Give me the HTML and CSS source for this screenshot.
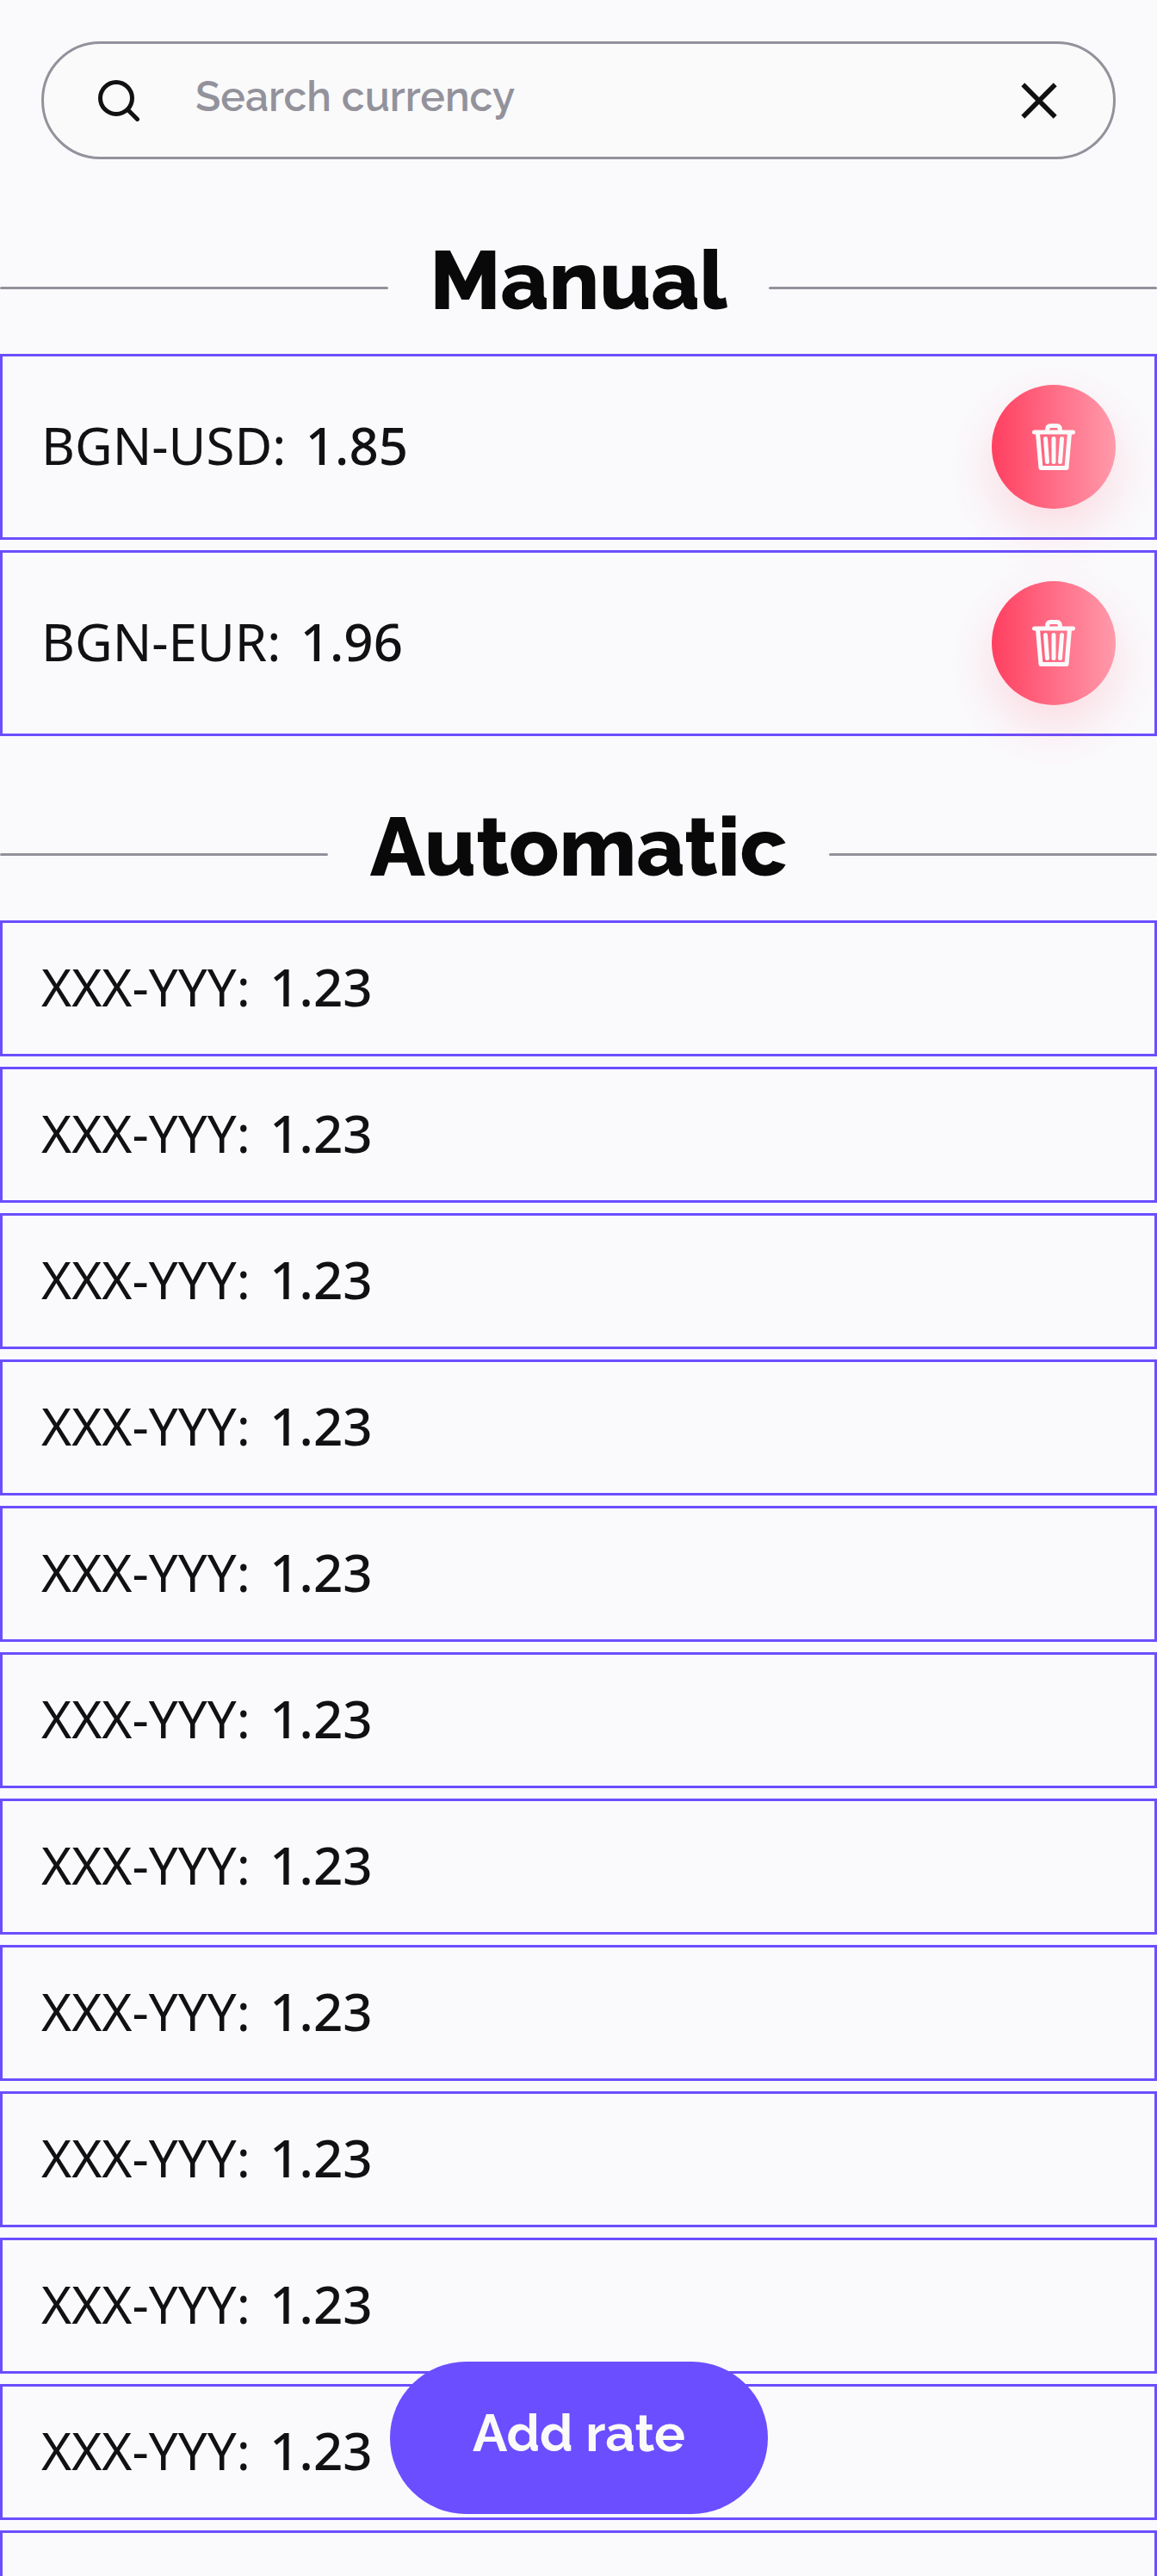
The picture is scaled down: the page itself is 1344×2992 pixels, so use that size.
FILE: index.html
```html
<!DOCTYPE html>
<html lang="en">
<head>
<meta charset="utf-8">
<title>Currency rates</title>
<link rel="stylesheet" href="styles.css">
</head>
<body>
<svg class="sprite" width="0" height="0">
  <symbol id="trash" viewBox="0 0 50 54">
    <g fill="none" stroke="currentColor" stroke-width="5" stroke-linecap="round" stroke-linejoin="round">
      <path d="M2.5 10H47.5M17.5 9V7.5Q17.5 2.5 21.5 2.5H28.5Q32.5 2.5 32.5 7.5V9M6.5 11 10 51.5H40L43.5 11"/>
      <path d="M15.5 17.5 17.5 44.5M25 17.5V44.5M34.5 17.5 32.5 44.5"/>
    </g>
  </symbol>
</svg>
<main class="screen">
  <div class="search">
    <svg class="search-icon" viewBox="0 0 48 48"><circle cx="21" cy="21" r="18.5"/><path d="M34.5 34.5 45.5 45.5"/></svg>
    <span class="placeholder">Search currency</span>
    <svg class="close-icon" viewBox="0 0 42 42"><path d="M2.3 2.3 39.7 39.7M39.7 2.3 2.3 39.7"/></svg>
  </div>
  <section class="group manual">
    <h2 class="title"><span>Manual</span></h2>
    <ul class="list">
      <li class="row tall"><span class="pair">BGN-USD:</span><b class="value">1.85</b><button class="delete" aria-label="Delete"><svg><use href="#trash"/></svg></button></li>
      <li class="row tall"><span class="pair">BGN-EUR:</span><b class="value">1.96</b><button class="delete" aria-label="Delete"><svg><use href="#trash"/></svg></button></li>
    </ul>
  </section>
  <section class="group automatic">
    <h2 class="title"><span>Automatic</span></h2>
    <ul class="list">
      <li class="row"><span class="pair">XXX-YYY:</span><b class="value">1.23</b></li>
      <li class="row"><span class="pair">XXX-YYY:</span><b class="value">1.23</b></li>
      <li class="row"><span class="pair">XXX-YYY:</span><b class="value">1.23</b></li>
      <li class="row"><span class="pair">XXX-YYY:</span><b class="value">1.23</b></li>
      <li class="row"><span class="pair">XXX-YYY:</span><b class="value">1.23</b></li>
      <li class="row"><span class="pair">XXX-YYY:</span><b class="value">1.23</b></li>
      <li class="row"><span class="pair">XXX-YYY:</span><b class="value">1.23</b></li>
      <li class="row"><span class="pair">XXX-YYY:</span><b class="value">1.23</b></li>
      <li class="row"><span class="pair">XXX-YYY:</span><b class="value">1.23</b></li>
      <li class="row"><span class="pair">XXX-YYY:</span><b class="value">1.23</b></li>
      <li class="row"><span class="pair">XXX-YYY:</span><b class="value">1.23</b></li>
      <li class="row"></li>
    </ul>
  </section>
  <button class="add">Add rate</button>
</main>
</body>
</html>
```
FILE: styles.css
```css
* { box-sizing: border-box; }
body { margin: 0; background: #fafafd; color: #111113; }
.sprite { position: absolute; }
.screen {
  position: relative;
  height: 2992px;
  overflow: hidden;
  padding-top: 48px;
  font-family: "Noto Sans", sans-serif;
}
.search {
  display: flex;
  align-items: center;
  height: 137px;
  margin: 0 48px;
  padding: 0 65px 0 63px;
  border: 3px solid #93929b;
  border-radius: 69px;
  background: #fafafb;
}
.search-icon, .close-icon { fill: none; stroke: #111113; }
.search-icon { width: 48px; height: 48px; stroke-width: 5; stroke-linecap: round; }
.close-icon { width: 42px; height: 42px; stroke-width: 5.6; overflow: visible; }
.placeholder {
  flex: 1;
  margin: -9px 0 0 65px;
  font: 600 48px/56px Raleway, Lato, sans-serif;
  color: #93929b;
}
.manual { margin-top: 72px; }
.automatic { margin-top: 60px; }
.title {
  display: flex;
  align-items: center;
  gap: 48px;
  height: 154px;
  margin: 0;
  font: 800 96px/113px Raleway, Lato, sans-serif;
  color: #090909;
}
.title::before, .title::after {
  content: "";
  flex: 1;
  height: 3px;
  border-radius: 2px;
  background: #93929b;
}
.title span { padding-bottom: 18px; text-align: center; }
.manual .title span { width: 346px; }
.automatic .title span { width: 486px; }
.list {
  display: flex;
  flex-direction: column;
  gap: 12px;
  margin: 0;
  padding: 0;
  list-style: none;
}
.row {
  display: flex;
  align-items: center;
  height: 158px;
  padding: 0 45px;
  border: 3px solid #6b4eff;
  font-size: 60px;
  line-height: 82px;
}
.tall { height: 216px; }
.pair, .value { padding-bottom: 4px; }
.pair { font-weight: 400; }
.value { margin-left: 22.5px; font-weight: 500; }
.delete {
  display: flex;
  align-items: center;
  justify-content: center;
  width: 144px;
  height: 144px;
  margin-left: auto;
  padding: 0;
  border: 0;
  border-radius: 50%;
  background: linear-gradient(90deg, #ff3f60, #ff9aab);
  box-shadow: 0 24px 60px rgba(255, 70, 90, .18);
  color: #fafafa;
}
.delete svg { width: 50px; height: 54px; }
.add {
  position: absolute;
  left: 453px;
  top: 2743px;
  width: 439px;
  height: 177px;
  padding: 0 0 12px;
  border: 0;
  border-radius: 89px;
  background: #6b4eff;
  color: #fafafa;
  font: 700 60px/70px Raleway, Lato, sans-serif;
  white-space: nowrap;
}
```
